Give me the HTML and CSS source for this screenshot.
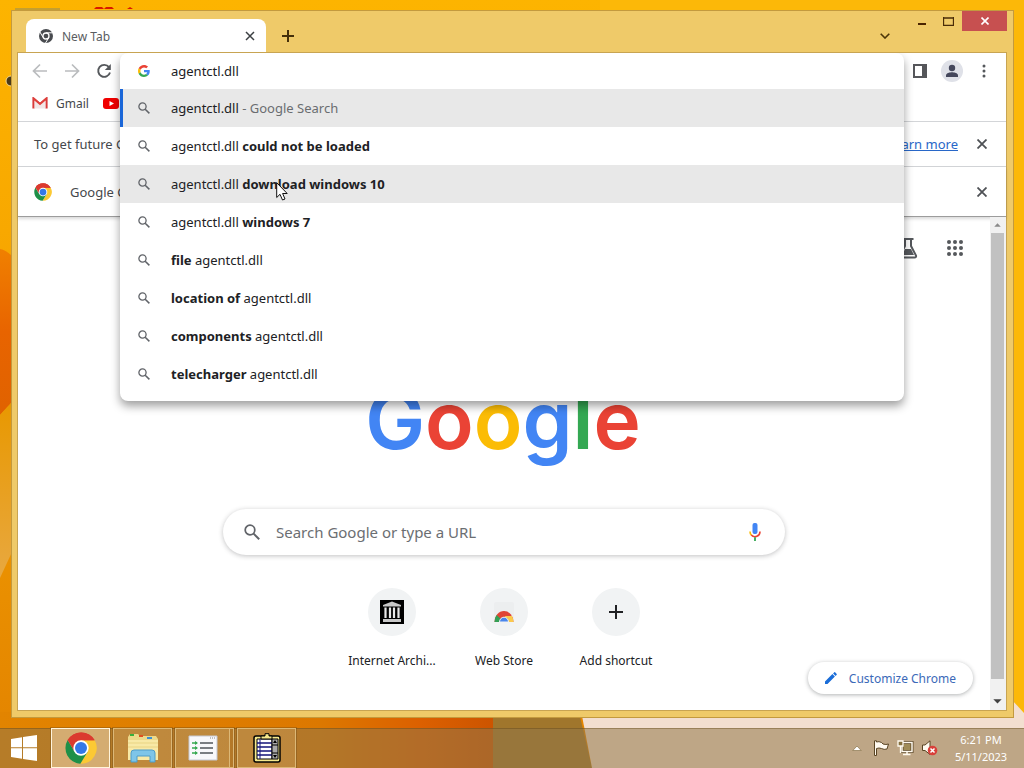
FILE: index.html
```
<!DOCTYPE html>
<html lang="en">
<head>
    <meta charset="UTF-8">
    <meta name="viewport" content="width=device-width, initial-scale=1.0">
    <title>New Tab</title>
    <link rel="stylesheet" href="styles.css">
</head>
<body>
  <svg class="wallpaper" viewBox="0 0 1024 768" preserveAspectRatio="none" aria-hidden="true">
    <defs>
      <linearGradient id="base" x1="0" y1="0" x2="0" y2="1">
        <stop offset="0" stop-color="#fdb400"/>
        <stop offset="0.3" stop-color="#f8a800"/>
        <stop offset="1" stop-color="#e28200"/>
      </linearGradient>
      <linearGradient id="petal" x1="0" y1="0" x2="0" y2="1">
        <stop offset="0" stop-color="#f08000"/>
        <stop offset="0.5" stop-color="#e86400"/>
        <stop offset="1" stop-color="#e06200"/>
      </linearGradient>
      <linearGradient id="leaf" x1="0" y1="0" x2="0" y2="1">
        <stop offset="0" stop-color="#e89800"/>
        <stop offset="1" stop-color="#e8a840"/>
      </linearGradient>
      <linearGradient id="floor" x1="0" y1="0" x2="1" y2="0">
        <stop offset="0" stop-color="#e28400"/>
        <stop offset="0.65" stop-color="#dc7800"/>
        <stop offset="0.85" stop-color="#dc6000"/>
        <stop offset="1" stop-color="#cc5400"/>
      </linearGradient>
    </defs>
    <rect width="1024" height="768" fill="url(#base)"/>
    <rect x="600" width="424" height="768" fill="#fcb808"/>
    <path d="M0 249Q6 250 12 256V402L0 415Z" fill="url(#petal)"/>
    <path d="M0 415L12 402V552L0 578Z" fill="url(#leaf)"/>
    <rect y="712" width="495" height="56" fill="url(#floor)"/>
    <path d="M493 712H579L592 768H493Z" fill="#a0762c"/>
    <path d="M579 700H1012L1024 713V768H592Z" fill="#f3dfd0"/>
    <path d="M15 9H60" stroke="#8d8a60"/>
    <path d="M94 9L96 7H102L104 9L106 7H112L114 9ZM127 9L130 7L133 9Z" fill="#d81800"/>
    <circle cx="11" cy="81" r="5" fill="#4a3a18" stroke="#f5d890" stroke-width="1"/>
  </svg>

  <main class="desktop">
    <section class="window">
      <header class="titlebar">
        <div class="tab">
          <svg width="16" height="16" viewBox="0 0 16 16" aria-hidden="true">
            <circle cx="8" cy="8" r="7" fill="#484b4f"/>
            <path d="M8 4.8H15M5.2 9.6L1.8 3.8M10.8 9.6L7.4 15.2" stroke="#fff" stroke-width="1"/>
            <circle cx="8" cy="8" r="3" fill="#484b4f" stroke="#fff" stroke-width="1.3"/>
          </svg>
          <span class="tab-title">New Tab</span>
          <button class="icon-button tab-close" aria-label="Close tab">
            <svg width="10" height="10" viewBox="0 0 10 10"><path d="M1 1L9 9M9 1L1 9" stroke="#3c4043" stroke-width="1.5"/></svg>
          </button>
        </div>
        <button class="icon-button new-tab" aria-label="New tab">
          <svg width="12" height="12" viewBox="0 0 12 12"><path d="M6 0V12M0 6H12" stroke="#45300a" stroke-width="2"/></svg>
        </button>
        <button class="icon-button tab-search" aria-label="Search tabs">
          <svg width="10" height="6" viewBox="0 0 10 6"><path d="M0.7 0.7L5 5L9.3 0.7" fill="none" stroke="#4d3608" stroke-width="1.6"/></svg>
        </button>
        <div class="caption-buttons">
          <button class="icon-button minimize" aria-label="Minimize">
            <svg width="10" height="10" viewBox="0 0 10 10"><path d="M1 8H9" stroke="#4a2400" stroke-width="2"/></svg>
          </button>
          <button class="icon-button maximize" aria-label="Maximize">
            <svg width="11" height="9" viewBox="0 0 11 9"><path d="M0.5 0V8.5H10.5V0M0 1H11" fill="none" stroke="#4a2c08" stroke-width="1.3"/></svg>
          </button>
          <button class="icon-button close-window" aria-label="Close">
            <svg width="8" height="8" viewBox="0 0 8 8"><path d="M0.5 0.5L7.5 7.5M7.5 0.5L0.5 7.5" stroke="#fff" stroke-width="1.6"/></svg>
          </button>
        </div>
      </header>

      <div class="client">
        <nav class="toolbar">
          <button class="icon-button" aria-label="Back">
            <svg width="16" height="16" viewBox="0 0 16 16"><path d="M15 8H2M8 1.5L1.5 8L8 14.5" fill="none" stroke="#babcbe" stroke-width="1.7"/></svg>
          </button>
          <button class="icon-button" aria-label="Forward">
            <svg width="16" height="16" viewBox="0 0 16 16"><path d="M1 8H14M8 1.5L14.5 8L8 14.5" fill="none" stroke="#babcbe" stroke-width="1.7"/></svg>
          </button>
          <button class="icon-button" aria-label="Reload">
            <svg width="16" height="16" viewBox="0 0 16 16"><path d="M13 4.2A6 6 0 1 0 14 9.5" fill="none" stroke="#55585c" stroke-width="1.9"/><path d="M14.8 1V7H8.8Z" fill="#55585c"/></svg>
          </button>

          <div class="omnibox">
            <div class="popup">
              <div class="omnibox-row">
                <svg width="12" height="12" viewBox="0 0 48 48" aria-hidden="true">
                  <path fill="#ea4335" d="M24 9.5c3.5 0 6.700 1.200 9.200 3.600l6.900-6.900C35.900 2.400 30.500 0 24 0 14.600 0 6.500 5.400 2.600 13.200l8 6.200C12.400 13.700 17.700 9.500 24 9.500z"/>
                  <path fill="#4285f4" d="M47 24.600c0-1.600-.2-3.100-.4-4.600H24v9h12.900c-.6 3-2.300 5.500-4.800 7.200l7.700 6C44.400 38 47 31.800 47 24.600z"/>
                  <path fill="#fbbc05" d="M10.500 28.600c-.5-1.500-.8-3-.8-4.600s.3-3.100.8-4.600l-8-6.200C.9 16.500 0 20.100 0 24s.9 7.500 2.600 10.800z"/>
                  <path fill="#34a853" d="M24 48c6.500 0 11.900-2.100 15.900-5.800l-7.700-6c-2.200 1.500-4.900 2.300-8.200 2.300-6.300 0-11.600-4.200-13.500-9.900l-8 6.200C6.500 42.600 14.600 48 24 48z"/>
                </svg>
                <input class="omnibox-input" type="text" aria-label="Address and search bar" value="agentctl.dll">
              </div>
              <ul class="suggestions">
                <li><a class="suggestion selected" href="#"><svg class="lens" viewBox="0 0 12 12"><use href="#lens"/></svg><span>agentctl.dll <span class="hint">- Google Search</span></span></a></li>
                <li><a class="suggestion" href="#"><svg class="lens" viewBox="0 0 12 12"><use href="#lens"/></svg><span>agentctl.dll <b>could not be loaded</b></span></a></li>
                <li><a class="suggestion hovered" href="#"><svg class="lens" viewBox="0 0 12 12"><use href="#lens"/></svg><span>agentctl.dll <b>download windows 10</b></span></a></li>
                <li><a class="suggestion" href="#"><svg class="lens" viewBox="0 0 12 12"><use href="#lens"/></svg><span>agentctl.dll <b>windows 7</b></span></a></li>
                <li><a class="suggestion" href="#"><svg class="lens" viewBox="0 0 12 12"><use href="#lens"/></svg><span><b>file</b> agentctl.dll</span></a></li>
                <li><a class="suggestion" href="#"><svg class="lens" viewBox="0 0 12 12"><use href="#lens"/></svg><span><b>location of</b> agentctl.dll</span></a></li>
                <li><a class="suggestion" href="#"><svg class="lens" viewBox="0 0 12 12"><use href="#lens"/></svg><span><b>components</b> agentctl.dll</span></a></li>
                <li><a class="suggestion" href="#"><svg class="lens" viewBox="0 0 12 12"><use href="#lens"/></svg><span><b>telecharger</b> agentctl.dll</span></a></li>
              </ul>
            </div>
          </div>

          <button class="icon-button" aria-label="Side panel">
            <svg width="14" height="14" viewBox="0 0 14 14"><path d="M1 1H13V13H1Z" fill="#fff" stroke="#55565a" stroke-width="2"/><path d="M9 1H13V13H9Z" fill="#55565a"/></svg>
          </button>
          <button class="icon-button" aria-label="Profile">
            <svg width="22" height="22" viewBox="0 0 22 22"><circle cx="11" cy="11" r="11" fill="#dfe1e8"/><circle cx="11" cy="8" r="3.200" fill="#44475c"/><path d="M5 17V15.500C5 13 9 12.300 11 12.300S17 13 17 15.500V17Z" fill="#44475c"/></svg>
          </button>
          <button class="icon-button" aria-label="Menu">
            <svg width="4" height="14" viewBox="0 0 4 14" fill="#55585c"><circle cx="2" cy="2" r="1.500"/><circle cx="2" cy="7" r="1.500"/><circle cx="2" cy="12" r="1.500"/></svg>
          </button>
        </nav>

        <div class="bookmarks">
          <a class="bookmark" href="#">
            <svg width="16" height="12" viewBox="0 0 16 12" aria-hidden="true"><path d="M1.500 11.500V1.500L8 7L14.500 1.500V11.500" fill="none" stroke="#d93a3a" stroke-width="2.200"/><path d="M2.600 2.500V11.500H13.400V2.500L8 7.500Z" fill="#f1e6e6"/><path d="M1.500 1.500L8 7L14.500 1.500" fill="none" stroke="#e0413c" stroke-width="1.800"/></svg>
            Gmail
          </a>
          <a class="bookmark" href="#" aria-label="YouTube">
            <svg width="16" height="11" viewBox="0 0 16 11" aria-hidden="true"><rect width="16" height="11" rx="3" fill="#f00000"/><path d="M6.500 3L11 5.500L6.500 8Z" fill="#fff"/></svg>
          </a>
        </div>

        <div class="infobar update-bar">
          <span class="infobar-text">To get future Google</span>
          <a class="infobar-link" href="#">Learn more</a>
          <button class="icon-button" aria-label="Dismiss">
            <svg width="10" height="10" viewBox="0 0 10 10"><path d="M0.500 0.500L9.500 9.500M9.500 0.500L0.500 9.500" stroke="#4e5155" stroke-width="1.800"/></svg>
          </button>
        </div>
        <div class="infobar default-bar">
          <svg class="infobar-icon" viewBox="0 0 48 48"><use href="#chrome-logo"/></svg>
          <span class="infobar-text">Google Chrome</span>
          <button class="icon-button" aria-label="Dismiss">
            <svg width="10" height="10" viewBox="0 0 10 10"><path d="M0.500 0.500L9.500 9.500M9.500 0.500L0.500 9.500" stroke="#4e5155" stroke-width="1.800"/></svg>
          </button>
        </div>

        <div class="viewport">
          <div class="page">
            <div class="page-links">
              <button class="icon-button" aria-label="Search Labs">
                <svg width="20" height="22" viewBox="0 0 20 22"><path d="M4.500 2H15.500M7 2V9L2 18.500Q1.500 20.500 3.500 20.500H16.500Q18.500 20.500 18 18.500L13 9V2" fill="none" stroke="#55585c" stroke-width="2"/><path d="M7 12H13L16 18H4Z" fill="#55585c"/></svg>
              </button>
              <button class="icon-button" aria-label="Google apps">
                <svg width="16" height="16" viewBox="0 0 16 16" fill="#55585c"><circle cx="2" cy="2" r="2"/><circle cx="8" cy="2" r="2"/><circle cx="14" cy="2" r="2"/><circle cx="2" cy="8" r="2"/><circle cx="8" cy="8" r="2"/><circle cx="14" cy="8" r="2"/><circle cx="2" cy="14" r="2"/><circle cx="8" cy="14" r="2"/><circle cx="14" cy="14" r="2"/></svg>
              </button>
            </div>

            <svg class="logo" viewBox="0 0 272 92" role="img" aria-label="Google">
              <text class="logo-text" x="135" y="72" text-anchor="middle"><tspan fill="#4285f4">G</tspan><tspan fill="#ea4335">o</tspan><tspan fill="#fbbc05">o</tspan><tspan fill="#4285f4">g</tspan><tspan fill="#34a853">l</tspan><tspan fill="#ea4335">e</tspan></text>
            </svg>

            <form class="searchbox">
              <svg class="searchbox-lens" viewBox="0 0 12 12"><use href="#lens"/></svg>
              <input class="searchbox-input" type="text" aria-label="Search" placeholder="Search Google or type a URL">
              <button class="icon-button" type="button" aria-label="Search by voice">
                <svg width="12" height="18" viewBox="0 0 12 18"><rect x="3.500" width="5" height="11" rx="2" fill="#4285f4"/><path d="M1 8.500A5 5 0 0 0 2.500 12.200" fill="none" stroke="#fbbc05" stroke-width="1.600"/><path d="M2.300 12A5 5 0 0 0 11 8.500" fill="none" stroke="#ea4335" stroke-width="1.600"/><path d="M6 14.200V18" stroke="#34a853" stroke-width="1.800"/></svg>
              </button>
            </form>

            <div class="tiles">
              <a class="tile" href="#">
                <span class="tile-icon">
                  <svg width="24" height="24" viewBox="0 0 24 24"><rect width="24" height="24" fill="#000"/><path d="M3 5L12 1.500L21 5V6.500H3ZM3 19H21V22H3Z" fill="#c8c8c8"/><path d="M5.500 7.500V18M10 7.500V18M14 7.500V18M18.500 7.500V18" stroke="#e8e8e8" stroke-width="2.200"/></svg>
                </span>
                <span class="tile-title">Internet Archi...</span>
              </a>
              <a class="tile" href="#">
                <span class="tile-icon">
                  <svg width="24" height="24" viewBox="0 0 24 24"><rect x="2" y="2" width="20" height="20" rx="2" fill="#eceeef"/><path d="M2.500 22A9.500 11 0 0 1 21.500 22Z" fill="#e04536"/><path d="M2.500 22Q2.500 18 4.500 15L9 19V22Z" fill="#34a055"/><path d="M13 16H20Q21.500 19 21.500 22H14Z" fill="#fbc94c"/><path d="M7.500 22A4.500 4.800 0 0 1 16.500 22Z" fill="#4a86ec" stroke="#f1f3f4" stroke-width="1"/></svg>
                </span>
                <span class="tile-title">Web Store</span>
              </a>
              <a class="tile" href="#">
                <span class="tile-icon">
                  <svg width="14" height="14" viewBox="0 0 14 14"><path d="M7 0V14M0 7H14" stroke="#202124" stroke-width="2"/></svg>
                </span>
                <span class="tile-title">Add shortcut</span>
              </a>
            </div>

            <button class="customize">
              <svg width="12" height="12" viewBox="0 0 12 12" aria-hidden="true"><path d="M0 12V9.500L7.400 2.100L9.900 4.600L2.500 12ZM8.100 1.400L9.300 0.200Q9.700 0 10.100 0.300L11.700 1.900Q12 2.300 11.700 2.700L10.600 3.900Z" fill="#1a6dd8"/></svg>
              Customize Chrome
            </button>
          </div>

          <div class="scrollbar" aria-hidden="true">
            <svg class="scroll-arrow" viewBox="0 0 14 16"><path d="M3.500 10L7 6L10.500 10Z" fill="#8a8a8a"/></svg>
            <div class="scroll-thumb"></div>
            <svg class="scroll-arrow" viewBox="0 0 14 16"><path d="M2.500 5L7 9.500L11.500 5Z" fill="#404040"/></svg>
          </div>
        </div>
      </div>
    </section>
  </main>

  <footer class="taskbar">
    <button class="start" aria-label="Start">
      <svg width="26" height="26" viewBox="0 0 26 26" fill="#fff"><path d="M0 4L11 2.300V12.300H0ZM12 2.100L26 0V12.300H12ZM0 13.300H11V23.700L0 22ZM12 13.300H26V26L12 23.900Z"/></svg>
    </button>
    <button class="task active" aria-label="Google Chrome">
      <svg width="32" height="32" viewBox="0 0 48 48"><use href="#chrome-logo"/></svg>
    </button>
    <button class="task" aria-label="File Explorer">
      <svg width="32" height="30" viewBox="0 0 32 30">
        <path d="M1 4L3 1H11L13 3H29L31 6V26H1Z" fill="#ecd98a"/>
        <path d="M3 1H7V3H3Z" fill="#38b03c"/><path d="M12 2H16V4H12Z" fill="#e05020"/><path d="M20 4H25V6H20Z" fill="#3f8fd0"/>
        <path d="M1 7H31V27H1Z" fill="#f8e9a6"/><path d="M1 10H31M1 14H31" stroke="#e9d483"/>
        <path d="M4 29V20Q4 17 7 17H25Q28 17 28 20V29H23V23H10V29Z" fill="#7ec5e8" stroke="#4e9cc8"/>
      </svg>
    </button>
    <button class="task stacked" aria-label="Task list">
      <svg width="30" height="26" viewBox="0 0 30 26"><path d="M1 1H29V25H1Z" fill="#f8f8fb" stroke="#c5c8d4"/><path d="M22 3H28" stroke="#888" stroke-dasharray="1 1"/><path d="M4 8H9M4 13H9M4 18H9" stroke="#35a850" stroke-width="1.500"/><path d="M7 6L10 8L7 10ZM7 11L10 13L7 15ZM7 16L10 18L7 20Z" fill="#35a850"/><path d="M12 8H25M12 13H25M12 18H25" stroke="#50565c" stroke-width="1.300"/></svg>
    </button>
    <button class="task" aria-label="Notes">
      <svg width="28" height="30" viewBox="0 0 28 30"><rect x="1" y="3" width="26" height="26" rx="2" fill="#f5e88c" stroke="#000" stroke-width="1.500"/><path d="M4 6H19V26H4Z" fill="#fff" stroke="#000"/><path d="M4 10H19M4 14H19M4 18H19M4 22H19" stroke="#14147a" stroke-width="1.500"/><path d="M7 6V26" stroke="#14147a"/><path d="M19 6H25V26H19Z" fill="#a9a9a9" stroke="#000"/><path d="M20 10L22 7L24 10ZM20 22L22 25L24 22Z" fill="#000"/><path d="M19 12H25M19 20H25" stroke="#000"/><path d="M8 6V3H12V0.700H16V3H19V6Z" fill="#f5e88c" stroke="#000"/></svg>
    </button>

    <div class="tray">
      <button class="tray-button" aria-label="Show hidden icons">
        <svg width="10" height="6" viewBox="0 0 10 6"><path d="M0.800 5.500L5 1L9.200 5.500Z" fill="#fff" stroke="#7b6537" stroke-width="0.600"/></svg>
      </button>
      <button class="tray-button" aria-label="Action Center">
        <svg width="17" height="16" viewBox="0 0 17 16"><path d="M1.500 0.800H3.500V2Q6 1 8.500 2.500L10 4Q13 5 15.500 4L14 9Q11 10 8.500 8.500Q6 7.500 3.500 8.500V15.500H1.500Z" fill="#fffaf0" stroke="#5a4524"/></svg>
      </button>
      <button class="tray-button" aria-label="Network">
        <svg width="17" height="16" viewBox="0 0 17 16"><path d="M5 2.500H15V11.500H5Z" fill="#a08c58" stroke="#5a4524" stroke-width="3"/><path d="M5 2.500H15V11.500H5ZM10 12V14M6 14.500H13.500" fill="none" stroke="#fffaf0" stroke-width="1.500"/><path d="M1 1H6V6H1ZM3.500 6V13" fill="#85703f" stroke="#fffaf0" stroke-width="1.300"/></svg>
      </button>
      <button class="tray-button" aria-label="Speakers muted">
        <svg width="17" height="16" viewBox="0 0 17 16"><path d="M1.500 5H4L9 0.800V14.500L4 10.500H1.500Z" fill="#fffaf0" stroke="#5a4524"/><circle cx="11.500" cy="10.500" r="4.800" fill="#d8403a"/><path d="M9.500 8.500L13.500 12.500M13.500 8.500L9.500 12.500" stroke="#fff" stroke-width="1.500"/></svg>
      </button>
      <div class="clock"><time>6:21 PM</time><time>5/11/2023</time></div>
    </div>
  </footer>

  <svg class="cursor" viewBox="0 0 12 19" aria-hidden="true"><path d="M0.700 0.700V15.500L4 12.300L6.500 18L9 17L6.600 11.500H11.200Z" fill="#fff" stroke="#111"/></svg>

  <!-- shared icons -->
  <svg class="symbols" aria-hidden="true">
    <symbol id="lens" viewBox="0 0 12 12">
      <circle cx="4.500" cy="4.500" r="3.600" fill="none" stroke="#606368" stroke-width="1.300"/>
      <path d="M7.200 7.200L11.400 11.400" stroke="#606368" stroke-width="1.500"/>
    </symbol>
    <symbol id="chrome-logo" viewBox="0 0 48 48">
      <path d="M24 24L4 12A23.500 23.500 0 0 1 44.500 12.500Z" fill="#db3a2f"/>
      <path d="M24 24V12.500H44.500A23.500 23.500 0 0 1 23 47.500L34 29Z" fill="#fcc934"/>
      <path d="M24 24L34 29.500L23 47.500A23.500 23.500 0 0 1 4 12L14 29Z" fill="#1e9048"/>
      <path d="M4 12A23.500 23.500 0 0 1 44.500 12.500H24L14 29Z" fill="#db3a2f"/>
      <circle cx="24" cy="24" r="11.500" fill="#fff"/>
      <circle cx="24" cy="24" r="9" fill="#3478e8"/>
    </symbol>
  </svg>
</body>
</html>
```
FILE: styles.css
```
* {
  box-sizing: border-box;
}

body {
  margin: 0;
  min-height: 100vh;
  display: flex;
  flex-direction: column;
  font-family: "Noto Sans", "Open Sans", sans-serif;
  font-size: 13px;
  color: #202124;
}

a {
  color: inherit;
  text-decoration: none;
}

button, input {
  font: inherit;
  color: inherit;
  border: none;
  background: none;
  padding: 0;
  outline: none;
}

svg {
  display: block;
  flex: none;
}

.icon-button {
  display: flex;
  align-items: center;
  justify-content: center;
  width: 32px;
  height: 32px;
}

.symbols {
  position: absolute;
  width: 0;
  height: 0;
}

.wallpaper {
  position: absolute;
  z-index: -1;
  top: 0;
  left: 0;
  width: 100%;
  height: 100%;
}

.cursor {
  position: absolute;
  z-index: 2;
  left: 276px;
  top: 182px;
  width: 12px;
  height: 19px;
}

/* window */
.desktop {
  flex: 1;
  display: flex;
  padding: 10px 10px 10px 11px;
}

.window {
  flex: 1;
  min-width: 0;
  display: flex;
  flex-direction: column;
  padding: 0 6px 7px;
  background: #efca69;
  border: 1px solid #c39a3e;
}

.titlebar {
  display: flex;
  height: 42px;
  padding-left: 8px;
}

.tab {
  display: flex;
  align-items: center;
  width: 240px;
  margin-top: 8px;
  padding: 0 8px 0 12px;
  gap: 8px;
  background: #fff;
  border-radius: 8px 8px 0 0;
}

.tab-title {
  flex: 1;
  font-size: 12px;
  color: #5a5d61;
}

.tab-close {
  width: 16px;
}

.new-tab {
  width: 44px;
  margin-top: 9px;
}

.tab-search {
  margin: 9px 7px 0 auto;
}

.caption-buttons {
  display: flex;
  height: 20px;
}

.caption-buttons .icon-button {
  height: 20px;
}

.minimize, .maximize {
  width: 27px;
}

.caption-buttons .close-window {
  width: 45px;
  background: #c75050;
}

.client {
  flex: 1;
  display: flex;
  flex-direction: column;
  margin-right: 1px;
  background: #fff;
  box-shadow: 0 0 0 1px #c8a452;
}

/* toolbar */
.toolbar {
  display: flex;
  align-items: center;
  height: 36px;
  padding: 0 6px;
}

.omnibox {
  position: relative;
  flex: 1;
  height: 36px;
}

.popup {
  position: absolute;
  z-index: 1;
  top: 0;
  left: 0;
  right: 0;
  padding-bottom: 8px;
  background: #fff;
  border-radius: 8px;
  box-shadow: 0 5px 10px rgba(0, 0, 0, 0.38);
  clip-path: inset(0 -20px -30px -20px);
}

.omnibox-row, .suggestion {
  display: flex;
  align-items: center;
  gap: 21px;
  padding-left: 18px;
}

.omnibox-row {
  height: 36px;
}

.omnibox-input {
  flex: 1;
}

.suggestions {
  list-style: none;
  margin: 0;
  padding: 0;
}

.suggestion {
  height: 38px;
}

.selected, .hovered {
  background: #e8e8e8;
}

.selected {
  box-shadow: inset 3px 0 #1a66d8;
}

.hint {
  color: #6a6d70;
}

.lens {
  width: 12px;
  height: 12px;
}

/* bookmarks and infobars */
.bookmarks {
  display: flex;
  align-items: center;
  height: 33px;
  padding: 0 14px 4px;
  gap: 14px;
  border-bottom: 1px solid #d3d5d8;
  font-size: 12px;
  color: #45484c;
}

.bookmark {
  display: flex;
  align-items: center;
  gap: 8px;
}

.infobar {
  display: flex;
  align-items: center;
  padding: 0 8px 0 16px;
  color: #45484c;
}

.update-bar {
  height: 45px;
  border-bottom: 1px solid #d3d5d8;
}

.default-bar {
  height: 50px;
  border-bottom: 1px solid #9c9c9c;
  box-shadow: 0 2px 3px rgba(0, 0, 0, 0.15);
}

.infobar-link {
  margin-right: 8px;
  color: #2867c8;
  text-decoration: underline;
}

.infobar-text {
  flex: 1;
}

.infobar-icon {
  width: 18px;
  height: 18px;
  margin-right: 18px;
}

/* new tab page */
.viewport {
  flex: 1;
  display: flex;
}

.page {
  position: relative;
  flex: 1;
  display: flex;
  flex-direction: column;
  align-items: center;
}

.page-links {
  display: flex;
  align-self: flex-end;
  gap: 15px;
  padding: 15px 19px 15px 0;
}

.logo {
  width: 272px;
  height: 92px;
  margin-top: 98px;
  overflow: visible;
}

.logo-text {
  font-family: Inter, sans-serif;
  font-size: 80px;
  font-weight: 600;
}

.searchbox {
  display: flex;
  align-items: center;
  width: 562px;
  max-width: 90%;
  height: 46px;
  margin-top: 40px;
  padding: 0 14px 0 21px;
  gap: 16px;
  border-radius: 23px;
  box-shadow: 0 1px 5px rgba(32, 33, 36, 0.28);
}

.searchbox-lens {
  width: 16px;
  height: 16px;
}

.searchbox-input {
  flex: 1;
  font-size: 15px;
}

.searchbox-input::placeholder {
  color: #6b6e72;
  opacity: 1;
}

.tiles {
  display: flex;
  margin-top: 33px;
}

.tile {
  display: flex;
  flex-direction: column;
  align-items: center;
  width: 112px;
  gap: 17px;
  font-size: 12px;
  line-height: 16px;
}

.tile-icon {
  display: flex;
  align-items: center;
  justify-content: center;
  width: 48px;
  height: 48px;
  border-radius: 50%;
  background: #f1f3f4;
}

.customize {
  position: absolute;
  right: 17px;
  bottom: 16px;
  display: flex;
  align-items: center;
  height: 32px;
  padding: 0 17px;
  gap: 12px;
  border-radius: 16px;
  background: #fff;
  color: #3b69b8;
  font-size: 12px;
  box-shadow: 0 1px 4px rgba(60, 64, 67, 0.4);
}

.scrollbar {
  display: flex;
  flex-direction: column;
  width: 16px;
  padding: 0 2px 0 1px;
  background: #f1f1f1;
}

.scroll-arrow {
  width: 13px;
  height: 16px;
}

.scroll-thumb {
  flex: 1;
  margin-bottom: 15px;
  background: #c1c1c1;
}

/* taskbar */
.taskbar {
  display: flex;
  height: 40px;
  gap: 3px;
  background: rgba(146, 118, 73, 0.55);
  box-shadow: inset 0 1px rgba(90, 60, 10, 0.35);
}

.start {
  display: flex;
  align-items: center;
  justify-content: center;
  width: 48px;
}

.task {
  display: flex;
  align-items: center;
  justify-content: center;
  width: 59px;
  border: 1px solid #dcb877;
  background: rgba(255, 235, 190, 0.14);
  box-shadow: 0 0 0 1px rgba(100, 70, 20, 0.35);
}

.active {
  border-color: #fff4dc;
  background: rgba(255, 240, 215, 0.42);
}

.stacked {
  padding-right: 4px;
  background: linear-gradient(to left, transparent 3px, #dcb877 3px, #dcb877 4px, rgba(255, 235, 190, 0.14) 4px);
}

.tray {
  display: flex;
  align-items: center;
  margin-left: auto;
  padding-right: 9px;
  color: #fff;
}

.tray-button {
  display: flex;
  align-items: center;
  justify-content: center;
  width: 24px;
  height: 32px;
}

.clock {
  display: flex;
  flex-direction: column;
  width: 68px;
  margin-left: 6px;
  text-align: center;
  line-height: 17px;
  font-size: 11px;
}
```
